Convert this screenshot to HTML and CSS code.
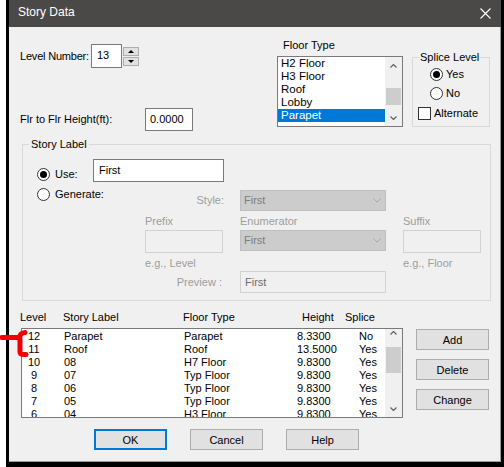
FILE: index.html
```html
<!DOCTYPE html>
<html lang="en">
<head>
  <meta charset="UTF-8" />
  <title>Story Data</title>
  <link rel="stylesheet" href="styles.css">
</head>
<body>
<div class="screen">
  <div class="frame">
    <div class="win">
      <div class="titlebar">
        <span>Story Data</span>
        <svg class="close" width="11" height="11" viewBox="0 0 11 11"><path d="M0.5 0.5 L10.5 10.5 M10.5 0.5 L0.5 10.5" stroke="#fff" stroke-width="1.1" fill="none"/></svg>
      </div>

      <div class="dlg">
        <div class="top">
          <div class="top-left">
            <div class="lvl-row">
              <span class="lvl-lbl">Level Number:</span>
              <div class="edit spin-edit">13</div>
              <div class="spin-btns">
                <span class="spin-btn"><i class="tri-up"></i></span>
                <span class="spin-btn"><i class="tri-dn"></i></span>
              </div>
            </div>
            <div class="flr-row">
              <span class="flr-lbl">Flr to Flr Height(ft):</span>
              <div class="edit flr-edit">0.0000</div>
            </div>
          </div>

          <div class="floor-type">
            <div class="cap">Floor Type</div>
            <div class="listbox">
              <div class="items">
                <div class="item">H2 Floor</div>
                <div class="item">H3 Floor</div>
                <div class="item">Roof</div>
                <div class="item">Lobby</div>
                <div class="item sel">Parapet</div>
              </div>
              <div class="vscroll">
                <div class="arrow"><svg width="7" height="4" viewBox="0 0 7 4"><polyline points="0.5,3.5 3.5,0.5 6.5,3.5" stroke="#606060" stroke-width="1.2" fill="none"/></svg></div>
                <div class="track"><div class="thumb thumb-floor"></div></div>
                <div class="arrow"><svg width="7" height="4" viewBox="0 0 7 4"><polyline points="0.5,0.5 3.5,3.5 6.5,0.5" stroke="#606060" stroke-width="1.2" fill="none"/></svg></div>
              </div>
            </div>
          </div>

          <fieldset class="group splice">
            <legend>Splice Level</legend>
            <div class="opt opt-yes"><span class="radio on"></span>Yes</div>
            <div class="opt opt-no"><span class="radio"></span>No</div>
            <div class="opt opt-alt"><span class="check"></span>Alternate</div>
          </fieldset>
        </div>

        <fieldset class="group story">
          <legend>Story Label</legend>
          <div class="use-row">
            <div class="opt use-opt"><span class="radio on"></span>Use:</div>
            <div class="edit use-edit">First</div>
          </div>
          <div class="gen">
            <div class="opt gen-opt"><span class="radio"></span>Generate:</div>
            <span class="dis r1 style-lbl">Style:</span>
            <div class="combo r1"><span>First</span><svg width="8" height="5" viewBox="0 0 8 5"><polyline points="0.5,0.5 4,4 7.5,0.5" stroke="#a8a8a8" stroke-width="1" fill="none"/></svg></div>

            <span class="dis r2 c1">Prefix</span>
            <span class="dis r2 c3">Enumerator</span>
            <span class="dis r2 c5">Suffix</span>

            <div class="dis-box r3 c1"></div>
            <div class="combo r3"><span>First</span><svg width="8" height="5" viewBox="0 0 8 5"><polyline points="0.5,0.5 4,4 7.5,0.5" stroke="#a8a8a8" stroke-width="1" fill="none"/></svg></div>
            <div class="dis-box r3 c5"></div>

            <span class="dis r4 c1">e.g., Level</span>
            <span class="dis r4 c5">e.g., Floor</span>

            <span class="dis r5 preview-lbl">Preview :</span>
            <div class="dis-box preview r5">First</div>
          </div>
        </fieldset>

        <div class="levels">
          <div class="levels-main">
            <div class="hdr">
              <span>Level</span>
              <span>Story Label</span>
              <span>Floor Type</span>
              <span>Height</span>
              <span>Splice</span>
            </div>
            <div class="table-box">
              <div class="rows">
                <div class="row"><span>12</span><span>Parapet</span><span>Parapet</span><span>8.3300</span><span>No</span></div>
                <div class="row"><span>11</span><span>Roof</span><span>Roof</span><span>13.5000</span><span>Yes</span></div>
                <div class="row"><span>10</span><span>08</span><span>H7 Floor</span><span>9.8300</span><span>Yes</span></div>
                <div class="row"><span>9</span><span>07</span><span>Typ Floor</span><span>9.8300</span><span>Yes</span></div>
                <div class="row"><span>8</span><span>06</span><span>Typ Floor</span><span>9.8300</span><span>Yes</span></div>
                <div class="row"><span>7</span><span>05</span><span>Typ Floor</span><span>9.8300</span><span>Yes</span></div>
                <div class="row"><span>6</span><span>04</span><span>H3 Floor</span><span>9.8300</span><span>Yes</span></div>
              </div>
              <div class="vscroll tbl-scroll">
                <div class="arrow"><svg width="7" height="4" viewBox="0 0 7 4"><polyline points="0.5,3.5 3.5,0.5 6.5,3.5" stroke="#606060" stroke-width="1.2" fill="none"/></svg></div>
                <div class="track"><div class="thumb thumb-tbl"></div></div>
                <div class="arrow"><svg width="7" height="4" viewBox="0 0 7 4"><polyline points="0.5,0.5 3.5,3.5 6.5,0.5" stroke="#606060" stroke-width="1.2" fill="none"/></svg></div>
              </div>
            </div>
          </div>
          <div class="side-btns">
            <button class="btn">Add</button>
            <button class="btn">Delete</button>
            <button class="btn">Change</button>
          </div>
        </div>

        <div class="footer">
          <button class="btn default">OK</button>
          <button class="btn">Cancel</button>
          <button class="btn">Help</button>
        </div>
      </div>
    </div>
  </div>

  <svg class="mark" width="30" height="32" viewBox="0 0 30 32">
    <path d="M2 9.5 H19 M25 4.5 Q19 5 20 11 V24 Q20.5 27 26 26.5" stroke="#f20000" stroke-width="5" stroke-linecap="round" stroke-linejoin="round" fill="none"/>
  </svg>
</div>
</body>
</html>
```

FILE: styles.css
```css
* { box-sizing: border-box; }

body {
  margin: 0;
  background: #fff;
  font-family: "Liberation Sans", Arial, sans-serif;
  font-size: 11px;
  line-height: 13px;
  color: #000;
}

.screen {
  position: relative;
  width: 504px;
  height: 467px;
  padding-left: 6px;
}
.frame {
  width: 498px;
  height: 467px;
  background: #000;
  padding: 0 3px 5px 3px;
}
.win {
  width: 492px;
  height: 462px;
  display: flex;
  flex-direction: column;
}

.titlebar {
  height: 27px;
  flex: none;
  background: #4b4947;
  color: #fff;
  font-size: 12px;
  display: flex;
  align-items: center;
  justify-content: space-between;
  padding: 0 10px 2px 9px;
}
.close { margin-top: 2px; }

.dlg {
  flex: 1;
  background: #f0f0f0;
  border-right: 1px solid #9a9a9a;
  border-bottom: 1px solid #9a9a9a;
}

/* common controls */
.edit {
  background: #fff;
  border: 1px solid #7a7a7a;
}
.opt {
  display: flex;
  align-items: center;
  gap: 3px;
  height: 13px;
  white-space: nowrap;
}
.radio {
  width: 13px;
  height: 13px;
  border: 1px solid #333;
  border-radius: 50%;
  background: #fff;
  flex: none;
  position: relative;
}
.radio.on::after {
  content: "";
  position: absolute;
  left: 2px;
  top: 2px;
  width: 7px;
  height: 7px;
  border-radius: 50%;
  background: #000;
}
.check {
  width: 13px;
  height: 13px;
  border: 1px solid #333;
  background: #fff;
  flex: none;
}
.btn {
  width: 73px;
  height: 21px;
  padding: 0;
  background: #e1e1e1;
  border: 1px solid #adadad;
  font-family: inherit;
  font-size: 11px;
  color: #000;
}
.btn.default { border: 2px solid #0078d7; }

.group {
  margin: 0;
  padding: 0;
  border: 1px solid #d9d9d9;
}
.group legend {
  padding: 0 2px;
  margin-left: 6px;
  line-height: 13px;
}

/* top area */
.top {
  display: flex;
  height: 111px;
  padding-left: 11px;
}
.top-left {
  width: 257px;
  padding-top: 17px;
}
.lvl-row {
  display: flex;
  align-items: center;
  height: 24px;
}
.lvl-lbl {
  width: 71px;
  flex: none;
  white-space: nowrap;
  letter-spacing: -0.2px;
}
.spin-edit {
  width: 31px;
  height: 24px;
  padding: 0 5px;
  line-height: 21px;
}
.spin-btns {
  display: flex;
  flex-direction: column;
  gap: 1px;
  margin-left: 1px;
}
.spin-btn {
  width: 16px;
  height: 9px;
  background: #e1e1e1;
  border: 1px solid #adadad;
  display: flex;
  align-items: center;
  justify-content: center;
}
.tri-up, .tri-dn {
  width: 0;
  height: 0;
  border-left: 3px solid transparent;
  border-right: 3px solid transparent;
}
.tri-up { border-bottom: 3px solid #000; }
.tri-dn { border-top: 3px solid #000; }

.flr-row {
  display: flex;
  align-items: center;
  height: 23px;
  margin-top: 40px;
}
.flr-lbl { width: 125px; white-space: nowrap; }
.flr-edit {
  width: 48px;
  height: 23px;
  padding-left: 4px;
  line-height: 20px;
}

.floor-type {
  width: 126px;
  padding-top: 12px;
}
.floor-type .cap { padding-left: 6px; }
.listbox {
  margin-top: 4px;
  height: 71px;
  border: 1px solid #7a7a7a;
  background: #fff;
  display: flex;
}
.items {
  flex: 1;
  overflow: hidden;
}
.item {
  height: 13px;
  padding-left: 3px;
  font-size: 11.5px;
}
.item.sel {
  background: #0078d7;
  color: #fff;
}

.vscroll {
  width: 17px;
  flex: none;
  background: #f0f0f0;
  display: flex;
  flex-direction: column;
}
.vscroll .arrow {
  height: 17px;
  display: flex;
  align-items: center;
  justify-content: center;
}
.vscroll .track { flex: 1; }
.thumb {
  margin: 0 1px;
  background: #cdcdcd;
}
.thumb-floor { margin-top: 14px; height: 17px; }

.splice {
  width: 78px;
  height: 76px;
  margin: 24px 0 0 9px;
}
.splice legend { padding: 0 1px; }
.opt-yes { margin: 4px 0 0 17px; }
.opt-no { margin: 6px 0 0 17px; }
.opt-alt { margin: 7px 0 0 5px; }

/* story label */
.story {
  width: 469px;
  margin-left: 13px;
  padding-bottom: 7px;
}
.use-row {
  display: flex;
  align-items: flex-start;
  margin-top: 8px;
  padding-left: 14px;
}
.use-opt {
  width: 56px;
  margin-top: 9px;
  gap: 5px;
}
.use-edit {
  width: 131px;
  height: 23px;
  padding-left: 5px;
  line-height: 20px;
}

.gen {
  display: grid;
  grid-template-columns: 122px 78px 17px 146px 17px 78px;
  grid-template-rows: 21px 19px 23px 18px 22px;
  margin-top: 8px;
}
.gen-opt {
  grid-column: 1;
  grid-row: 1;
  align-self: start;
  margin: -2px 0 0 14px;
  gap: 5px;
}
.dis { color: #9d9d9d; }
.r1 { grid-row: 1; }
.r2 { grid-row: 2; padding-top: 4px; }
.r3 { grid-row: 3; }
.r4 { grid-row: 4; padding-top: 4px; }
.r5 { grid-row: 5; }
.c1 { grid-column: 2; }
.c3 { grid-column: 4; }
.c5 { grid-column: 6; }
.style-lbl {
  grid-column: 2 / 4;
  align-self: center;
  text-align: right;
  padding-right: 16px;
}
.preview-lbl {
  grid-column: 2 / 4;
  align-self: center;
  text-align: right;
  padding-right: 18px;
}
.combo {
  grid-column: 4;
  height: 21px;
  background: #cccccc;
  border: 1px solid #bfbfbf;
  color: #7d7d7d;
  display: flex;
  align-items: center;
  justify-content: space-between;
  padding: 0 4px 0 3px;
}
.dis-box {
  border: 1px solid #d2d2d2;
  background: #f0f0f0;
}
.preview {
  grid-column: 4;
  color: #6d6d6d;
  padding-left: 4px;
  line-height: 20px;
}

/* levels list */
.levels {
  display: flex;
  margin: 10px 0 0 11px;
}
.levels-main { width: 383px; }
.hdr {
  display: grid;
  grid-template-columns: 43px 120px 119px 43px auto;
  height: 13px;
}
.table-box {
  margin: 4px 0 0 1px;
  width: 382px;
  height: 90px;
  border: 1px solid #7a7a7a;
  background: #fff;
  display: flex;
}
.rows {
  flex: 1;
  overflow: hidden;
  padding-top: 1px;
}
.row {
  display: grid;
  grid-template-columns: 24px 138px 113px 62px auto;
  height: 13px;
}
.row span:first-child { text-align: center; }
.row span:nth-child(2) { padding-left: 18px; }
.tbl-scroll .arrow:first-child {
  height: 10px;
  align-items: flex-start;
  padding-top: 2px;
}
.thumb-tbl { margin-top: 8px; height: 26px; }

.side-btns {
  display: flex;
  flex-direction: column;
  gap: 9px;
  margin: 18px 0 0 13px;
}

.footer {
  display: flex;
  gap: 23px;
  margin: 11px 0 0 85px;
}

.mark {
  position: absolute;
  left: 0;
  top: 328px;
}
```
